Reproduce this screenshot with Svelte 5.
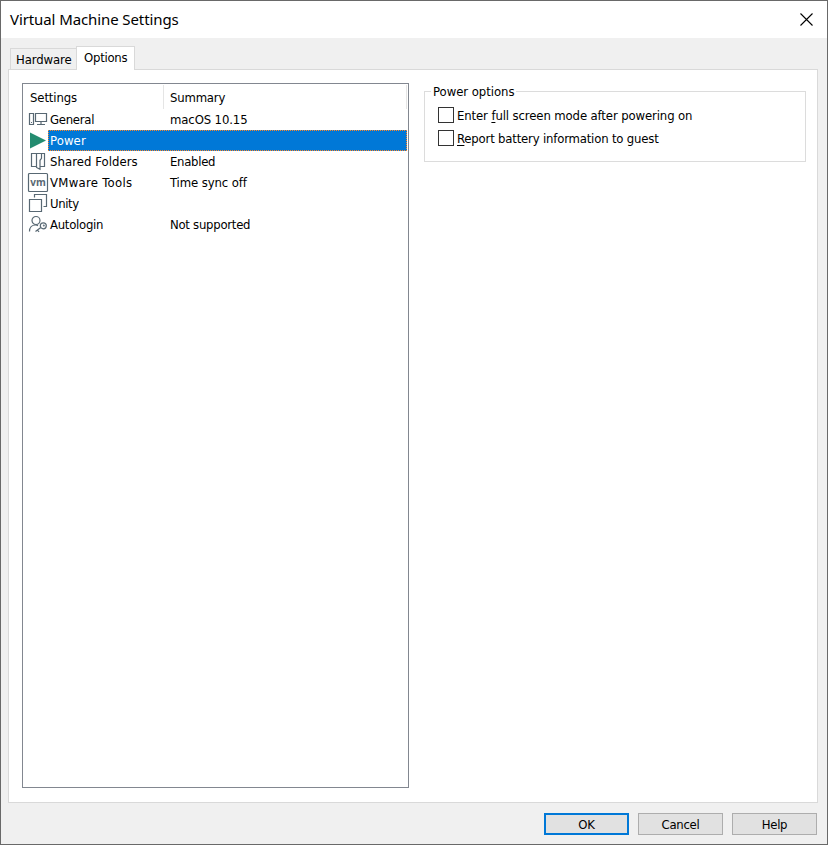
<script>
  const rows = [
    { id: 'general', name: 'General', summary: 'macOS 10.15' },
    { id: 'power', name: 'Power', summary: '' },
    { id: 'folders', name: 'Shared Folders', summary: 'Enabled' },
    { id: 'tools', name: 'VMware Tools', summary: 'Time sync off' },
    { id: 'unity', name: 'Unity', summary: '' },
    { id: 'autologin', name: 'Autologin', summary: 'Not supported' }
  ];
  let selected = $state('power');
</script>

<div class="dialog">
  <header>
    <h1>Virtual Machine Settings</h1>
    <svg class="close" width="13" height="13" viewBox="0 0 13 13"><path d="M.5 .5l12 12M12.5 .5l-12 12" /></svg>
  </header>
  <nav>
    <div class="tab">Hardware</div>
    <div class="tab active">Options</div>
  </nav>
  <main>
    <section class="list">
      <div class="head"><span class="h1">Settings</span><span class="h2">Summary</span></div>
      {#each rows as row}
        <div class="row {row.id}" class:selected={row.id === selected} onclick={() => (selected = row.id)} role="presentation">
          <svg class="icon" width="20" height="21" viewBox="0 0 20 21">
            {#if row.id === 'general'}
              <path d="M1.5 4.500h4v11h-4zM3 13.500h1M7.500 4.500h11v8h-11zM13 12.500v3M9 15.500h8" />
            {:else if row.id === 'power'}
              <path class="play" d="M2 2.500L18 10.500L2 18.500z" />
            {:else if row.id === 'folders'}
              <path d="M8.500 15.500h-5v-13h13v13h-4M8.500 2.500v14l3.500 1.800v-9l1.500-2v-5" />
            {:else if row.id === 'tools'}
              <rect x=".5" y="1.500" width="19" height="18" rx="1" />
              <text x="10" y="13.500" text-anchor="middle">vm</text>
            {:else if row.id === 'unity'}
              <path d="M1.500 6.500h12v12h-12zM6.500 4.500v-3h12v12h-3" />
            {:else}
              <circle cx="8" cy="6.500" r="4" />
              <path d="M1.500 17.500c0-4 2.500-6.500 6-6.500 1 0 1.700.2 2.500.6M12.800 13.500l-5.300 4M9.500 16l1.500 1.800" />
              <circle cx="15.300" cy="11.800" r="3" /><circle cx="15.800" cy="11.500" r=".4" />
            {/if}
          </svg>
          <div class="cells"><span class="name">{row.name}</span><span class="sum">{row.summary}</span></div>
        </div>
      {/each}
    </section>
    <fieldset>
      <legend>Power options</legend>
      <label><input type="checkbox" /><span>Enter <u>f</u>ull screen mode after powering on</span></label>
      <label><input type="checkbox" /><span class="second"><u>R</u>eport battery information to guest</span></label>
    </fieldset>
  </main>
  <footer>
    <button class="ok">OK</button>
    <button>Cancel</button>
    <button>Help</button>
  </footer>
</div>

<style>
  .dialog {
    box-sizing: border-box;
    width: 828px;
    height: 845px;
    border: 1px solid #696969;
    background: #f0f0f0;
    color: #000;
    font: 13px/21px 'DejaVu Sans Condensed', 'DejaVu Sans', sans-serif;
    font-stretch: condensed;
    letter-spacing: -0.12px;
    display: flex;
    flex-direction: column;
    overflow: hidden;
    white-space: nowrap;
  }
  header {
    height: 37px;
    background: #fff;
    display: flex;
    justify-content: space-between;
    align-items: center;
    padding: 0 14px 0 9px;
  }
  h1 {
    margin: 0;
    font: 15px/37px 'Noto Sans', sans-serif;
    letter-spacing: -0.1px;
  }
  .close { fill: none; stroke: #000; stroke-width: 1.1; }
  nav {
    height: 31px;
    padding-left: 9px;
    display: flex;
    align-items: flex-end;
  }
  .tab {
    box-sizing: border-box;
    width: 66px;
    height: 21px;
    padding-left: 5px;
    border: 1px solid #d9d9d9;
    border-width: 1px 0 0 1px;
    line-height: 21px;
  }
  .active {
    width: 59px;
    height: 24px;
    margin-bottom: -1px;
    padding-left: 7px;
    border-right-width: 1px;
    background: #fff;
    position: relative;
    letter-spacing: -0.25px;
  }
  main {
    box-sizing: border-box;
    width: 810px;
    height: 734px;
    margin-left: 7px;
    padding: 13px 11px 14px 13px;
    border: 1px solid #d9d9d9;
    background: #fff;
    display: flex;
    align-items: flex-start;
    gap: 15px;
  }
  .list {
    box-sizing: border-box;
    width: 387px;
    height: 705px;
    border: 1px solid #828790;
  }
  .head {
    box-sizing: border-box;
    width: 384px;
    height: 24px;
    margin: 1px 0 0;
    border-right: 1px solid #e5e5e5;
    display: flex;
    line-height: 25px;
  }
  .h1 { box-sizing: border-box; width: 141px; padding-left: 7px; border-right: 1px solid #e5e5e5; }
  .h2 { padding-left: 6px; }
  .row { display: flex; height: 21px; padding-left: 5px; }
  .icon { flex: none; overflow: visible; fill: none; stroke: #586873; stroke-width: 1.2; letter-spacing: 0; }
  .play { fill: #238c70; stroke: none; }
  .icon text { font: bold 10px 'Open Sans', sans-serif; fill: #586873; stroke: none; }
  .cells { box-sizing: border-box; width: 359px; padding: 0 0 0 2px; display: flex; line-height: 21px; }
  .name { width: 120px; }
  .general .name, .autologin .name, .autologin .sum { letter-spacing: -0.27px; }
  .power .name { letter-spacing: 0.1px; }
  .unity .name { letter-spacing: -0.4px; }
  .folders .name { letter-spacing: 0.05px; }
  .tools .name { letter-spacing: 0.3px; }
  .folders .sum { letter-spacing: -0.3px; }
  .h2 { letter-spacing: -0.2px; }
  .second { letter-spacing: -0.19px; }
  .selected .cells {
    background: #0078d7;
    outline: 1px dotted #ff8728;
    outline-offset: -1px;
    color: #fff;
  }
  fieldset {
    box-sizing: border-box;
    width: 382px;
    height: 78px;
    margin: 1px 0 0;
    padding: 8px 0 0 13px;
    border: 1px solid #dcdcdc;
  }
  legend { line-height: 15px; margin-left: -7px; padding: 0 2px; letter-spacing: -0.05px; }
  label { display: flex; height: 23px; line-height: 17px; }
  input {
    appearance: none;
    box-sizing: border-box;
    width: 16px;
    height: 16px;
    margin: 0 3px 0 0;
    border: 1px solid #333;
    background: #fff;
  }
  u { text-decoration: underline; text-underline-offset: 2px; text-decoration-skip-ink: none; }
  footer {
    display: flex;
    justify-content: flex-end;
    gap: 9px;
    padding: 10px 10px 0 0;
  }
  button {
    box-sizing: border-box;
    width: 85px;
    height: 22px;
    padding: 0;
    border: 1px solid #adadad;
    background: #e1e1e1;
    color: #000;
    font: inherit;
    letter-spacing: -0.3px;
    line-height: 21px;
  }
  .ok { border: 2px solid #0078d7; line-height: 19px; }
</style>
